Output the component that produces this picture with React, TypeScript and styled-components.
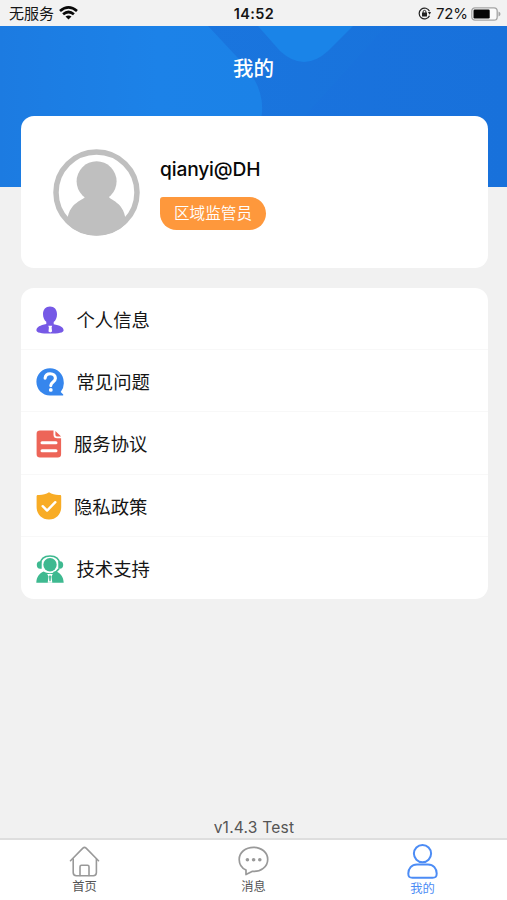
import React from "react";
import styled, { createGlobalStyle } from "styled-components";

const GlobalStyle = createGlobalStyle`
  * { box-sizing: border-box; }
  body { margin: 0; background: #f1f1f1; }
  svg { display: block; flex: none; }
`;

const Screen = styled.div`
  width: 100%;
  height: 900px;
  display: flex;
  flex-direction: column;
  overflow: hidden;
  background: #f1f1f1;
  color: #151515;
  font-family: Inter, "Noto Sans CJK SC", sans-serif;
`;

const StatusBar = styled.header`
  height: 25.5px;
  flex: none;
  display: grid;
  grid-template-columns: 1fr auto 1fr;
  align-items: center;
  padding: 2px 6px 0 9px;
  background: #f2f2f2;
  font-size: 15px;
  line-height: 22px;
`;

const StatusGroup = styled.div<{ $end?: boolean }>`
  display: flex;
  align-items: center;
  justify-content: ${(p) => (p.$end ? "flex-end" : "flex-start")};
  gap: ${(p) => (p.$end ? "3px" : "5px")};
`;

const Clock = styled.time`
  margin-right: 2px;
  font-size: 14.5px;
  font-weight: 600;
  letter-spacing: 0.35px;
`;

const Percent = styled.span`
  margin-left: 2px;
  font-size: 15px;
  letter-spacing: -0.1px;
`;

const Hero = styled.div`
  position: relative;
  height: 161px;
  flex: none;
  background: #1975df;
`;

const HeroArt = styled.svg`
  position: absolute;
  inset: 0;
  width: 100%;
  height: 100%;
`;

const Title = styled.h1`
  position: relative;
  margin: 0;
  padding-top: 28px;
  font-size: 20.5px;
  font-weight: 500;
  line-height: 30px;
  text-align: center;
  color: #fff;
`;

const Content = styled.main`
  position: relative;
  flex: 1;
  display: flex;
  flex-direction: column;
  margin-top: -70.5px;
  padding: 0 19.5px 0 20.5px;
`;

const Card = styled.section`
  flex: none;
  border-radius: 13px;
  background: #fff;
`;

const Profile = styled(Card)`
  display: flex;
  gap: 20px;
  height: 152px;
  padding: 33px 32.5px;
`;

const Identity = styled.div`
  display: flex;
  flex-direction: column;
  align-items: flex-start;
  padding-top: 7px;
`;

const UserName = styled.div`
  font-size: 19.2px;
  font-weight: 500;
  line-height: 27px;
  letter-spacing: -0.15px;
  color: #080808;
`;

const Role = styled.div`
  height: 33px;
  margin-top: 14px;
  padding: 1px 14px 0;
  border-radius: 3px 17px 17px 17px;
  background: #fe983c;
  color: #fff;
  font-size: 15.6px;
  font-weight: 350;
  line-height: 32px;
`;

const Menu = styled(Card)`
  margin-top: 20px;
  height: 311px;
  display: grid;
  grid-template-rows: repeat(5, 1fr);
`;

const MenuRow = styled.div<{ $wide?: boolean }>`
  display: flex;
  align-items: center;
  gap: ${(p) => (p.$wide ? "13px" : "12.5px")};
  padding-left: 15px;
  padding-top: 2px;
  border-bottom: 1px solid #f8f8f8;
  font-size: 18.35px;
  line-height: 28px;
  &:last-child { border-bottom: 0; }
`;

const MenuLabel = styled.span`
  padding-top: 1px;
`;

const Version = styled.footer`
  margin-top: auto;
  font-size: 15.6px;
  line-height: 20px;
  letter-spacing: 0.2px;
  text-align: center;
  color: #555;
`;

const TabBar = styled.nav`
  height: 62px;
  flex: none;
  display: grid;
  grid-template-columns: repeat(3, 1fr);
  border-top: 2px solid #dedede;
  background: #fff;
`;

const Tab = styled.div<{ $active?: boolean }>`
  display: flex;
  flex-direction: column;
  align-items: center;
  gap: 2px;
  padding-top: ${(p) => (p.$active ? "4px" : "6px")};
  color: ${(p) => (p.$active ? "#4c8cf5" : "#999")};
`;

const TabLabel = styled.span<{ $active?: boolean }>`
  font-size: 12.3px;
  line-height: 16px;
  color: ${(p) => (p.$active ? "#4c8cf5" : "#555")};
`;

const WifiIcon = () => (
  <svg width="19" height="15" viewBox="0 0 19 15" fill="none" stroke="#080808" strokeWidth="2.7">
    <path d="M1 5Q9.5 -2.2 18 5" />
    <path d="M4.1 8.3Q9.5 3.7 14.9 8.3" />
    <path d="M6.5 10.6Q9.5 8.2 12.5 10.6L9.5 13.6Z" fill="#080808" stroke="none" />
  </svg>
);

const RotationLockIcon = () => (
  <svg width="13" height="13" viewBox="0 0 13 13" fill="none" stroke="#222" strokeWidth="1.2">
    <path d="M11.5 4.3A5.4 5.4 0 1 0 11.5 8.7" />
    <path d="M9.9 5.1h3.1l-1.3 2.6z" fill="#222" stroke="none" />
    <rect x="4" y="5.6" width="5" height="3.8" rx=".5" fill="#222" stroke="none" />
    <path d="M5.1 6V4.8a1.4 1.4 0 0 1 2.8 0V6" strokeWidth="1" />
  </svg>
);

const BatteryIcon = () => (
  <svg width="30" height="14" viewBox="0 0 30 14">
    <rect x=".8" y=".8" width="25.4" height="12.4" rx="3.2" fill="#fafafa" stroke="#a4a4a4" strokeWidth="1.3" />
    <rect x="2.5" y="2.5" width="16.2" height="9" rx="1.2" fill="#050505" />
    <path d="M27.5 4.5Q29.5 5.2 29.5 7T27.5 9.5Z" fill="#a4a4a4" />
  </svg>
);

const Avatar = () => (
  <svg width="87" height="87" viewBox="0 0 87 87">
    <defs><clipPath id="avatar-clip"><circle cx="43.5" cy="43.5" r="43" /></clipPath></defs>
    <circle cx="43.5" cy="43.5" r="40.5" fill="#fff" stroke="#bfbfbf" strokeWidth="5.5" />
    <g fill="#bfbfbf" clipPath="url(#avatar-clip)">
      <circle cx="43.6" cy="32.3" r="20" />
      <path d="M33 46C33 52 14 51 14 76L24 87H64L73 76C73 51 55 52 55 46Z" />
    </g>
  </svg>
);

const PersonIcon = () => (
  <svg width="28" height="28" viewBox="0 0 28 28">
    <path d="M14 .5c-4.3 0-7 3.1-7 7.5 0 3.5 1.2 6.2 3.3 7.8v2.2C4 19.2.6 21 .4 24.2.2 26.7 5.5 27.5 14 27.5s13.8-.8 13.6-3.3C27.4 21 24 19.2 17.7 18.2V16C19.8 14.4 21 11.7 21 8.2 21 3.6 18.3.5 14 .5Z" fill="#7659e6" />
    <path d="M12.3 19.7h3.9l-.6 1.7.5 4.2-1.8 1-1.8-1 .4-4.2Z" fill="#fff" />
  </svg>
);

const QuestionIcon = () => (
  <svg width="28" height="28" viewBox="0 0 28 28" fill="none">
    <path d="M14 .3C6.3.3.4 6.2.4 13.8S6.3 27.5 14 27.5h12.5c.8 0 1-.7.5-1.2l-2.3-2.4a13.2 13.2 0 0 0 3-10.1C27.7 6.2 21.6.3 14 .3Z" fill="#3686ed" />
    <path d="M9.1 10.2C9.4 7 11.2 5.8 14.2 5.8c3.1 0 5.2 1.8 5.2 4.5 0 3.8-4.6 3.6-4.6 7.3" stroke="#fff" strokeWidth="3.1" strokeLinecap="round" />
    <circle cx="14.8" cy="21.9" r="1.9" fill="#fff" />
  </svg>
);

const DocumentIcon = () => (
  <svg width="26" height="28" viewBox="0 0 26 28" fill="none">
    <path d="M4 .5h13.5v4.2c0 2.5 1.3 3.5 3.7 3.5h3.9v16.1c0 2.1-1.2 3.2-3.3 3.2H4c-2.1 0-3.4-1.1-3.4-3.2V3.7C.6 1.6 1.9.5 4 .5Z" fill="#ed6558" />
    <path d="m19.4.9 5.7 5.5h-3.5c-1.5 0-2.2-.6-2.2-2Z" fill="#ed6558" />
    <path d="M6 12.7h14M6 20.7h14" stroke="#fff" strokeWidth="3" strokeLinecap="round" />
  </svg>
);

const ShieldIcon = () => (
  <svg width="26" height="28" viewBox="0 0 26 28" fill="none">
    <path d="M13 .3c3.2 2.2 7 2.9 11 2.7.7 0 1.2.5 1.2 1.2V15c0 7.1-4.8 12.5-12.2 12.5S.6 22.1.6 15V4.2C.6 3.5 1.3 3 2 3 6 3.2 9.8 2.5 13 .3Z" fill="#f8ac25" />
    <path d="m6.7 14.2 4.4 4.4 8.2-8.4" stroke="#fff" strokeWidth="2.4" strokeLinecap="round" strokeLinejoin="round" />
  </svg>
);

const SupportIcon = () => (
  <svg width="28" height="28" viewBox="0 0 28 28" fill="none">
    <path d="M4 9.3C4.7 3.6 8.7 1 14 1S23.3 3.6 24 9.3M23 13.7c-1.5 2.2-3.2 3.5-5.7 4" stroke="#3eb990" strokeWidth="1.6" />
    <path d="M5.7 6.3H4.1c-2.3 0-3.3 1.4-3.3 3.8s1.2 3.6 3.3 3.6h1.6ZM22.3 6.3h1.6c2.3 0 3.3 1.4 3.3 3.8s-1.2 3.6-3.3 3.6h-1.6Z" fill="#3eb990" />
    <circle cx="14" cy="9.8" r="6.7" fill="#3eb990" />
    <path d="M7.7 16.6C3 18.6.6 22.2.3 27.8h27.4c-.3-5.6-2.7-9.2-7.4-11.2C17 18.7 11 18.7 7.7 16.6Z" fill="#3eb990" />
    <path d="M11.2 19.1h5.6l-1.3 2.3.8 6.4h-4.6l.8-6.4Z" fill="#fff" />
    <path d="m13 20.1 1 1.2 1-1.2-.3 5.7-.7.8-.7-.8Z" fill="#3eb990" />
  </svg>
);

const HomeIcon = () => (
  <svg width="31" height="31" viewBox="0 0 31 31" fill="none" stroke="currentColor" strokeWidth="1.6" strokeLinejoin="round" strokeLinecap="round">
    <path d="M1.5 14.7 13.9 2.1q1.6-1.6 3.2 0L29.5 14.7" />
    <path d="M4.2 13v13.6q0 3.1 3.1 3.1h17q3.1 0 3.1-3.1V13" />
    <path d="M11 29.5V20.7q0-1.5 1.5-1.5h6q1.5 0 1.5 1.5v8.8" />
  </svg>
);

const MessageIcon = () => (
  <svg width="31" height="31" viewBox="0 0 31 31" fill="none" stroke="currentColor" strokeWidth="1.7" strokeLinejoin="round">
    <path d="M15.5 1.3C7.5 1.3 1.2 6.5 1.2 13.4c0 5 2.4 8.5 6.8 10.6v4.6l6-3.2c9 .6 15.7-4.8 15.7-12C29.7 6.5 23.5 1.3 15.5 1.3Z" />
    <g fill="currentColor" stroke="none"><circle cx="9.4" cy="13.8" r="1.8" /><circle cx="15.6" cy="13.8" r="1.8" /><circle cx="21.8" cy="13.8" r="1.8" /></g>
  </svg>
);

const ProfileIcon = () => (
  <svg width="31" height="35" viewBox="0 0 31 35" fill="none" stroke="currentColor" strokeWidth="2">
    <circle cx="15.5" cy="9.6" r="8.6" />
    <path d="M10 20.4H21c5.4 0 8.7 4.2 8.7 9.1 0 3.5-1.2 4.2-4.2 4.2h-20c-3 0-4.2-.7-4.2-4.2 0-4.9 3.3-9.1 8.7-9.1Z" />
  </svg>
);

const menuItems = [
  { label: "个人信息", icon: <PersonIcon />, wide: true },
  { label: "常见问题", icon: <QuestionIcon />, wide: true },
  { label: "服务协议", icon: <DocumentIcon /> },
  { label: "隐私政策", icon: <ShieldIcon /> },
  { label: "技术支持", icon: <SupportIcon />, wide: true },
];

const tabs = [
  { label: "首页", icon: <HomeIcon /> },
  { label: "消息", icon: <MessageIcon /> },
  { label: "我的", icon: <ProfileIcon />, active: true },
];

export default function App() {
  return (
    <Screen>
      <GlobalStyle />
      <StatusBar>
        <StatusGroup>无服务<WifiIcon /></StatusGroup>
        <Clock>14:52</Clock>
        <StatusGroup $end><RotationLockIcon /><Percent>72%</Percent><BatteryIcon /></StatusGroup>
      </StatusBar>
      <Hero>
        <HeroArt viewBox="0 0 507 161" preserveAspectRatio="none">
          <defs>
            <linearGradient id="left-surface"><stop stopColor="#1c7be1" /><stop offset=".6" stopColor="#1c82e8" /><stop offset="1" stopColor="#1b82e7" /></linearGradient>
            <linearGradient id="right-surface"><stop stopColor="#1b77e0" /><stop offset="1" stopColor="#1872db" /></linearGradient>
            <linearGradient id="far-surface"><stop stopColor="#1a73de" /><stop offset="1" stopColor="#1871db" /></linearGradient>
          </defs>
          <path d="M0 0H507V161H0Z" fill="url(#right-surface)" />
          <path d="M0 0H208L237 31Q264 58 262 86L253 161H0Z" fill="url(#left-surface)" />
          <path d="M258 0H353L328 25Q304 47 280 25Z" fill="#1a84e8" />
          <path d="M386 0H507V161H230L305 90Z" fill="url(#far-surface)" />
        </HeroArt>
        <Title>我的</Title>
      </Hero>
      <Content>
        <Profile>
          <Avatar />
          <Identity>
            <UserName>qianyi@DH</UserName>
            <Role>区域监管员</Role>
          </Identity>
        </Profile>
        <Menu>
          {menuItems.map((item) => (
            <MenuRow key={item.label} $wide={item.wide}>{item.icon}<MenuLabel>{item.label}</MenuLabel></MenuRow>
          ))}
        </Menu>
        <Version>v1.4.3 Test</Version>
      </Content>
      <TabBar>
        {tabs.map((tab) => (
          <Tab key={tab.label} $active={tab.active}>{tab.icon}<TabLabel $active={tab.active}>{tab.label}</TabLabel></Tab>
        ))}
      </TabBar>
    </Screen>
  );
}
